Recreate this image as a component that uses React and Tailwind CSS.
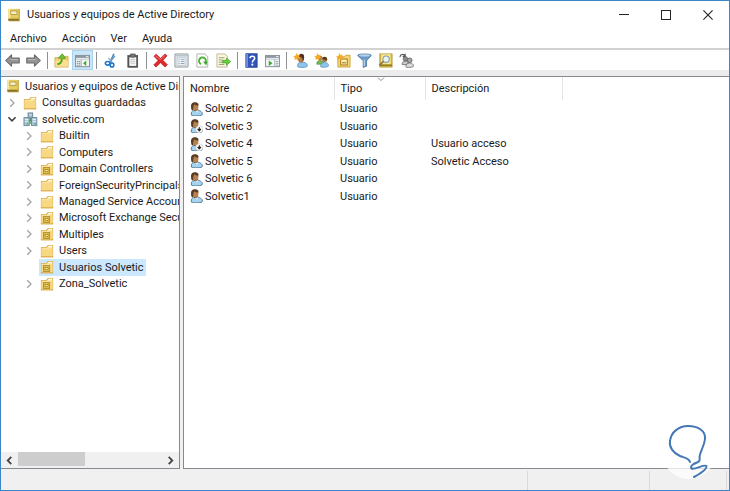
import React from "react";

/* ---------- icons ---------- */

function Svg({ size = "size-[15px]", children, ...rest }) {
  return (
    <svg viewBox="0 0 16 16" className={`${size} shrink-0`} aria-hidden="true" {...rest}>
      {children}
    </svg>
  );
}

const ConsoleIcon = () => (
  <Svg size="size-[14px]">
    <rect x="2" y="1.2" width="12.6" height="14" fill="#b89b35" />
    <rect x="1.4" y="1" width="12" height="12.6" fill="#e6cd62" />
    <rect x="1.4" y="1" width="2.4" height="12.6" fill="#f5e79c" />
    <rect x="4.4" y="3.4" width="7" height="4" fill="#f4efc9" stroke="#a58a2c" strokeWidth=".8" />
    <rect x="1.4" y="12.2" width="12" height="2.2" fill="#8e7426" />
  </Svg>
);

const FolderShape = () => (
  <>
    <path d="M1 3.400h6l2-2.400h6v14H1z" fill="#d9ab48" />
    <path d="M1.800 4.200h6l2-2.400h4.400v12.400H1.800z" fill="#fae3a0" />
    <path d="M1.800 6h8.600l1.600-1.600h2.200v9.800H1.800z" fill="#f8d882" />
    <path d="M10 2.400h3.800v1.200H9.200z" fill="#fffbe8" />
    <path d="M1 14.600h14" stroke="#d3a440" strokeWidth=".9" />
  </>
);

const FolderIcon = () => (
  <Svg size="size-[14px]">
    <FolderShape />
  </Svg>
);

const UnitIcon = () => (
  <Svg size="size-[14px]">
    <FolderShape />
    <rect x="4" y="6.400" width="7" height="6.600" fill="#e8c24e" stroke="#a98a2c" strokeWidth="1" />
    <rect x="5.800" y="8.600" width="3.400" height="2.400" fill="#fff3bd" stroke="#9c7a1c" strokeWidth=".8" />
  </Svg>
);

const DomainIcon = () => (
  <Svg size="size-[15px]">
    <path d="M8 5v4M3 9h10" stroke="#5d8f6a" strokeWidth="1.2" />
    <rect x="5.4" y="1" width="5" height="6" fill="#9fb8c8" stroke="#557687" strokeWidth=".8" />
    <rect x="1" y="6" width="5.6" height="8.6" fill="#a9c3d2" stroke="#5b7b8c" strokeWidth=".8" />
    <rect x="9.2" y="6" width="5.6" height="8.6" fill="#a9c3d2" stroke="#5b7b8c" strokeWidth=".8" />
    <path d="M2 8h3.6M2 10h3.6M10.2 8h3.6M10.2 10h3.6M6.4 3h3" stroke="#eef6fa" strokeWidth=".9" />
    <path d="M6.4 10.6h3M7 12h2" stroke="#4aa35a" strokeWidth="1.3" />
    <path d="M4 12.6h1.4M12.2 12.6h1.4" stroke="#3fae52" strokeWidth="1.4" />
  </Svg>
);

const UserShape = () => (
  <>
    <path d="M2.800 15C2 11.400 4 9 7.400 9c4.200 0 8 2 8 4.600 0 1.600-2.600 2.200-6 2.200-3.200 0-6.400 0-6.600-.8z" fill="#a6d3f0" stroke="#3c6685" strokeWidth=".9" />
    <path d="M6.600 9.400l2.400 2.600 1.600-2.400" fill="#eef8ff" />
    <ellipse cx="6.800" cy="5.200" rx="4" ry="4.600" fill="#b5814f" />
    <path d="M3 9C1.400 4 2.600.4 6.600.4c3.200 0 4.800 1.600 4.200 3.600C9 4.200 7.200 3.400 5.800 2.800 5 4.600 4.600 7 4.600 9.400z" fill="#5a3d26" />
    <path d="M5.400 9.600c2 1 4 .4 4.800-1.600" stroke="#6b4426" strokeWidth=".8" fill="none" />
  </>
);

const UserIcon = ({ disabled }) => (
  <Svg size="size-[14px]">
    <UserShape />
    {disabled && (
      <>
        <circle cx="11.800" cy="11.800" r="4.100" fill="#fff" stroke="#a9a9a9" strokeWidth=".5" />
        <path d="M11.800 9.200v4M9.900 11.600l1.900 2.400 1.900-2.400z" stroke="#222" strokeWidth="1.100" fill="#222" />
      </>
    )}
  </Svg>
);

const ArrowIcon = ({ flip }) => (
  <Svg>
    <path
      d={flip ? "M15.300 8L9 2v3.400H.8v5.200H9V14z" : "M.7 8L7 2v3.400h8.200v5.200H7V14z"}
      fill="#949494"
      stroke="#686868"
      strokeWidth="1.100"
      strokeLinejoin="round"
    />
    <path d={flip ? "M2 7h8" : "M6 7h8"} stroke="#b9b9b9" strokeWidth="1" />
  </Svg>
);

const UpFolderIcon = () => (
  <Svg>
    <path d="M1 5h5l1.500-1.400H15V15H1z" fill="#f3d070" stroke="#c79d3d" strokeWidth=".8" />
    <path d="M1.500 8H15v6.600H1.500z" fill="#f9df94" />
    <path d="M3.600 12c3.200-.6 4.800-2.800 4.800-6" stroke="#4fa51f" strokeWidth="2" fill="none" />
    <path d="M4.600 5.400L8.800.8l3.600 5z" fill="#6fc531" stroke="#3f8c17" strokeWidth=".7" />
  </Svg>
);

const PaneIcon = ({ play }) => (
  <Svg>
    <rect x=".6" y="2.600" width="14.800" height="12" fill="#f5f6f6" stroke="#7f8b93" strokeWidth="1" />
    <rect x=".6" y="2.600" width="14.800" height="2.600" fill="#8e9aa3" />
    <path d="M1 6.600h14" stroke="#c7ced3" strokeWidth="1.200" />
    <path d="M11.800 3.900h2.600" stroke="#fff" strokeWidth="1" />
    {play ? (
      <>
        <path d="M10.400 7v7.400" stroke="#8e9aa3" strokeWidth=".8" />
        <path d="M4 8l4 2.900-4 2.900z" fill="#43a832" />
        <path d="M11.600 9h2.600M11.600 11h2.600M11.600 13h2.600" stroke="#7f98a8" strokeWidth=".9" />
      </>
    ) : (
      <>
        <path d="M6.600 7v7.400" stroke="#8e9aa3" strokeWidth=".8" />
        <path d="M12 8l-3.400 2.900L12 13.800z" fill="#43a832" />
        <path d="M2 9h1.400M4 9h1.600M2 11h1.400M4 11h1.600M2 13h1.400M4 13h1.600" stroke="#5f7f92" strokeWidth="1" />
      </>
    )}
  </Svg>
);

const CutIcon = () => (
  <Svg>
    <path d="M11.600.8L7.600 10" stroke="#4f87b4" strokeWidth="1.700" />
    <path d="M5.800 5.200l4.400 6" stroke="#8fb4d0" strokeWidth="1.500" />
    <path d="M12.800 3L7.600 9.600" stroke="#6b9cc2" strokeWidth="1.400" />
    <ellipse cx="5" cy="11" rx="2.500" ry="1.900" fill="none" stroke="#1d77c9" strokeWidth="1.700" />
    <ellipse cx="9.600" cy="12.800" rx="1.900" ry="2.200" fill="none" stroke="#1d77c9" strokeWidth="1.700" />
  </Svg>
);

const ClipboardIcon = () => (
  <Svg>
    <rect x="3" y="2.600" width="10.600" height="12.600" fill="#555" stroke="#3e3e3e" strokeWidth=".6" />
    <rect x="4.600" y="4.400" width="7.400" height="9.400" fill="#f5f5f5" />
    <rect x="5.600" y="1" width="5.400" height="3.400" rx=".6" fill="#777" stroke="#444" strokeWidth=".7" />
    <path d="M5.800 6.800h5M5.800 8.800h5M5.800 10.800h5" stroke="#b5b5b5" strokeWidth=".8" />
  </Svg>
);

const DeleteIcon = () => (
  <Svg>
    <path
      d="M1 3.400L3.400 1.200 8 5.600 12.800 1 15 3 10.600 7.800 15.400 12.600 12.800 15 8 10.400 3.200 15 .8 12.800 5.400 8z"
      fill="#dd2b2b"
      stroke="#b81b1f"
      strokeWidth=".7"
    />
    <path d="M2.600 3l5.400 4 4.800-4.400" stroke="#f27b75" strokeWidth="1" fill="none" />
  </Svg>
);

const PropertiesIcon = () => (
  <Svg>
    <rect x="1" y="1" width="14" height="14" rx="1" fill="#f5f8fa" stroke="#8d989e" strokeWidth="1.100" />
    <path d="M2 3h12" stroke="#b6c2ca" strokeWidth="1.600" />
    <rect x="3.200" y="5.200" width="9.600" height="7.800" fill="#fff" stroke="#9eafba" strokeWidth=".8" />
    <path d="M4.600 7.200h1.400M7 7.200h4.400M4.600 9.200h1.400M7 9.200h4.400M4.600 11.200h1.400M7 11.200h4.400" stroke="#7c97a9" strokeWidth=".9" />
  </Svg>
);

const PagePath = () => (
  <path d="M2 1h8.600L13.600 4v11H2z" fill="#fdfdfa" stroke="#a7aaa5" strokeWidth=".9" />
);

const RefreshIcon = () => (
  <Svg>
    <PagePath />
    <path d="M6.400 11.800a3.700 3.700 0 1 1 4.400-1" stroke="#4bb539" strokeWidth="2" fill="none" />
    <path d="M8.600 9.400l4.600-.4-1.200 4.200z" fill="#3ba32b" />
  </Svg>
);

const ExportIcon = () => (
  <Svg>
    <path d="M1 1h8.600L12 3.600V15H1z" fill="#fbf7dc" stroke="#b5af88" strokeWidth=".9" />
    <path d="M3 5h6M3 7.400h4M3 9.800h4M3 12.200h6" stroke="#8b8b78" strokeWidth=".9" />
    <path d="M7 7.800h4.200V5.400L15.600 9.200l-4.400 3.800v-2.400H7z" fill="#68cf3b" stroke="#3d9d20" strokeWidth=".7" />
  </Svg>
);

const HelpIcon = () => (
  <Svg>
    <rect x="2" y=".8" width="12" height="14.400" fill="#2f56b8" stroke="#1e3b8a" strokeWidth=".8" />
    <rect x="2.400" y="1" width="1.800" height="14" fill="#7b97de" />
    <path d="M6.400 5.600C6.400 2.600 11.400 2.600 11.400 5.600c0 2-2.500 2-2.500 4.400" stroke="#fff" strokeWidth="1.600" fill="none" />
    <circle cx="8.900" cy="12.400" r="1.100" fill="#fff" />
  </Svg>
);

const Spark = () => (
  <path d="M4 0l1 2.400L7.400 1.600 6.200 3.900 8 5.400l-2.400.4L5.200 8 3.600 6.400 1.400 7.400 2 5 0 3.800l2.400-.6z" fill="#f9a825" />
);

const NewUserIcon = () => (
  <Svg>
    <path d="M5 14.600c-.6-3 1.200-5 4.200-5 3.400 0 6.200 1.600 6.200 3.800 0 1.400-2.200 2-5 2-3 0-5-.1-5.400-.8z" fill="#8fc5ec" stroke="#4682b0" strokeWidth=".7" />
    <ellipse cx="8.400" cy="5.800" rx="3.200" ry="4.200" fill="#b47d48" />
    <path d="M6.600 1.800C9.600-.4 12.600 1.400 11.800 5.400c-.2 1.800-1 3-1.800 3.800C10.800 6.400 10 4.400 6.600 4z" fill="#51331e" />
    <Spark />
  </Svg>
);

const NewGroupIcon = () => (
  <Svg>
    <circle cx="6.600" cy="5.400" r="2.600" fill="#b47d48" />
    <path d="M3 12c-.4-2.600 1-4 3.600-4s4 1.400 4 4z" fill="#73b955" stroke="#48853a" strokeWidth=".6" />
    <circle cx="11.400" cy="7" r="2.700" fill="#a66e3d" />
    <path d="M8.800 6.600C8.600 3.200 14.400 3 14 7.400c-1.600.2-3.400-1.200-5.200-.8z" fill="#55351e" />
    <path d="M7 14.600c-.2-2.800 1.400-4.600 4.200-4.600s4.400 1.600 4.400 3.600c0 1.600-8.200 2.400-8.600 1z" fill="#8fc5ec" stroke="#4682b0" strokeWidth=".6" />
    <Spark />
  </Svg>
);

const NewUnitIcon = () => (
  <Svg>
    <path d="M2 4h7l1.400-1.600H15V15H2z" fill="#f6d675" stroke="#c9992f" strokeWidth=".9" />
    <rect x="5" y="6.400" width="7" height="6.400" fill="#fff1b8" stroke="#a27b17" strokeWidth="1.100" />
    <path d="M6.600 10.400h3.800" stroke="#a27b17" strokeWidth="1.300" />
    <Spark />
  </Svg>
);

const FilterIcon = () => (
  <Svg>
    <path d="M.8 2.400c0-1.800 14.400-1.800 14.400 0 0 1.400-4.600 4.600-5 6V14l-3.600 1.400v-7c-.4-1.400-5.800-4.600-5.800-6z" fill="#6b9cc8" stroke="#3d6892" strokeWidth=".8" />
    <ellipse cx="8" cy="2.600" rx="6" ry="1.200" fill="#b6d2ea" />
    <path d="M7.700 7v7" stroke="#c2dcf1" strokeWidth="1.200" />
  </Svg>
);

const FindIcon = () => (
  <Svg>
    <rect x="2" y="1" width="13" height="14" fill="#dfc044" stroke="#a88c25" strokeWidth=".8" />
    <rect x="3.400" y="1.400" width="10" height="10.600" fill="#f5e996" />
    <path d="M2 13h13" stroke="#806a1a" strokeWidth="1.300" />
    <circle cx="8.600" cy="6.600" r="3.400" fill="#e9f4f6" stroke="#8c9da5" strokeWidth="1.200" />
    <path d="M6 9L1.400 13" stroke="#8e7446" strokeWidth="1.800" />
  </Svg>
);

const GroupAddIcon = () => (
  <Svg>
    <path d="M1 4.600C1 1 5 .6 6.200 3M6.600.8v2.800H3.800" stroke="#555" strokeWidth="1.200" fill="none" />
    <circle cx="6.800" cy="6.200" r="2.400" fill="#8b8b8b" stroke="#555" strokeWidth=".7" />
    <path d="M3.400 12.400C3 10 4.600 8.800 6.800 8.800s3.800 1.200 3.800 3.600z" fill="#c9c9c9" stroke="#666" strokeWidth=".8" />
    <circle cx="11.400" cy="7.800" r="2.500" fill="#a5a5a5" stroke="#555" strokeWidth=".8" />
    <path d="M7.400 14.800c-.2-2.600 1.400-4.200 4-4.200s4.200 1.600 4.200 3.200c0 1.600-7.800 2.200-8.200 1z" fill="#dadada" stroke="#666" strokeWidth=".8" />
  </Svg>
);

const Chevron = ({ open }) => (
  <svg viewBox="0 0 10 10" className="size-[10px] shrink-0" fill="none" aria-hidden="true">
    {open ? (
      <path d="M1.400 3.200L5 6.800l3.600-3.600" stroke="#404040" strokeWidth="1.600" />
    ) : (
      <path d="M3.200 1.200L7 5 3.200 8.800" stroke="#a3a3a3" strokeWidth="1.300" />
    )}
  </svg>
);

/* ---------- data ---------- */

const toolbar = [
  [
    ["Atrás", <ArrowIcon />],
    ["Adelante", <ArrowIcon flip />],
  ],
  [
    ["Subir un nivel", <UpFolderIcon />],
    ["Mostrar árbol", <PaneIcon />, true],
  ],
  [
    ["Cortar", <CutIcon />],
    ["Pegar", <ClipboardIcon />],
  ],
  [
    ["Eliminar", <DeleteIcon />],
    ["Propiedades", <PropertiesIcon />],
    ["Actualizar", <RefreshIcon />],
    ["Exportar lista", <ExportIcon />],
  ],
  [
    ["Ayuda", <HelpIcon />],
    ["Panel de acciones", <PaneIcon play />],
  ],
  [
    ["Nuevo usuario", <NewUserIcon />],
    ["Nuevo grupo", <NewGroupIcon />],
    ["Nueva unidad organizativa", <NewUnitIcon />],
    ["Filtro", <FilterIcon />],
    ["Buscar", <FindIcon />],
    ["Agregar a un grupo", <GroupAddIcon />],
  ],
];

const tree = [
  { label: "Usuarios y equipos de Active Directory", icon: <ConsoleIcon />, level: 0 },
  { label: "Consultas guardadas", icon: <FolderIcon />, level: 1, branch: true },
  { label: "solvetic.com", icon: <DomainIcon />, level: 1, branch: true, open: true },
  { label: "Builtin", icon: <FolderIcon />, level: 2, branch: true },
  { label: "Computers", icon: <FolderIcon />, level: 2, branch: true },
  { label: "Domain Controllers", icon: <UnitIcon />, level: 2, branch: true },
  { label: "ForeignSecurityPrincipals", icon: <FolderIcon />, level: 2, branch: true },
  { label: "Managed Service Accounts", icon: <FolderIcon />, level: 2, branch: true },
  { label: "Microsoft Exchange Security Groups", icon: <UnitIcon />, level: 2, branch: true },
  { label: "Multiples", icon: <UnitIcon />, level: 2, branch: true },
  { label: "Users", icon: <FolderIcon />, level: 2, branch: true },
  { label: "Usuarios Solvetic", icon: <UnitIcon />, level: 2, selected: true },
  { label: "Zona_Solvetic", icon: <UnitIcon />, level: 2, branch: true },
];

const users = [
  { name: "Solvetic 2", description: "" },
  { name: "Solvetic 3", description: "", disabled: true },
  { name: "Solvetic 4", description: "Usuario acceso", disabled: true },
  { name: "Solvetic 5", description: "Solvetic Acceso" },
  { name: "Solvetic 6", description: "" },
  { name: "Solvetic1", description: "" },
];

const indent = ["pl-[4px]", "pl-[6px]", "pl-[23px]"];

/* ---------- parts ---------- */

function TitleBar() {
  return (
    <header className="flex h-[27px] shrink-0 items-center pl-[6px]">
      <ConsoleIcon />
      <h1 className="flex-1 pl-[6px]">Usuarios y equipos de Active Directory</h1>
      <div className="flex h-full">
        <button aria-label="Minimizar" className="flex w-[42px] items-center justify-center">
          <svg viewBox="0 0 10 10" className="size-[10px]"><path d="M0 4.500h10" stroke="#222" /></svg>
        </button>
        <button aria-label="Maximizar" className="flex w-[42px] items-center justify-center">
          <svg viewBox="0 0 10 10" className="size-[10px]"><rect x=".5" y=".5" width="9" height="9" fill="none" stroke="#222" /></svg>
        </button>
        <button aria-label="Cerrar" className="flex w-[42px] items-center justify-center">
          <svg viewBox="0 0 10 10" className="size-[10px]"><path d="M.4.4l9.200 9.200M9.600.4L.4 9.600" stroke="#222" strokeWidth="1.100" /></svg>
        </button>
      </div>
    </header>
  );
}

function MenuBar() {
  return (
    <nav className="flex h-[20px] shrink-0 items-center gap-[15px] pl-[9px]">
      {["Archivo", "Acción", "Ver", "Ayuda"].map((item) => (
        <button key={item}>{item}</button>
      ))}
    </nav>
  );
}

function Toolbar() {
  return (
    <div className="h-[28px] shrink-0 border-t-2 border-[#d2d2d2] bg-[#ececec]">
      <div className="h-[20px] bg-white">
        <div role="toolbar" aria-label="Herramientas" className="flex h-full w-[416px] pl-px">
          {toolbar.map((group, g) => (
            <React.Fragment key={g}>
              {g > 0 && (
                <div className="flex w-[7px] shrink-0 items-center justify-center">
                  <div className="h-[17px] w-px bg-[#8f8f8f]" />
                </div>
              )}
              {group.map(([label, icon, active]) => (
                <button
                  key={label}
                  aria-label={label}
                  className={`flex flex-1 items-center justify-center ${active ? "bg-[#cbe5f8] outline outline-[#a8d4f3] -outline-offset-1" : ""}`}
                >
                  {icon}
                </button>
              ))}
            </React.Fragment>
          ))}
        </div>
      </div>
    </div>
  );
}

function Tree() {
  return (
    <aside className="flex w-[179px] shrink-0 flex-col border border-l-0 border-[#858a90] bg-white">
      <div className="flex-1 overflow-hidden pt-px">
        <ul role="tree" className="flex h-[214px] flex-col">
          {tree.map((node) => (
            <li
              key={node.label}
              role="treeitem"
              aria-level={node.level + 1}
              aria-expanded={node.branch ? !!node.open : undefined}
              aria-selected={!!node.selected}
              className={`flex flex-1 items-center whitespace-nowrap ${indent[node.level]}`}
            >
              {node.level > 0 && (
                <span className="flex w-[15px] shrink-0">
                  {node.branch && <Chevron open={node.open} />}
                </span>
              )}
              <span className={`flex h-full items-center gap-[4px] pr-[2px] ${node.selected ? "bg-[#cce8ff]" : ""}`}>
                <span className="flex w-[16px] shrink-0 justify-center">{node.icon}</span>
                {node.label}
              </span>
            </li>
          ))}
        </ul>
      </div>
      <div className="flex h-[16px] shrink-0 items-center bg-[#f0f0f0]">
        <button aria-label="Desplazar a la izquierda" className="flex w-[17px] justify-center">
          <svg viewBox="0 0 10 10" className="size-[9px]" fill="none"><path d="M7 1L3 5l4 4" stroke="#444" strokeWidth="2" /></svg>
        </button>
        <div className="h-full flex-1">
          <div className="h-[14px] w-[67px] bg-[#cdcdcd]" />
        </div>
        <button aria-label="Desplazar a la derecha" className="flex w-[17px] justify-center">
          <svg viewBox="0 0 10 10" className="size-[9px]" fill="none"><path d="M3 1l4 4-4 4" stroke="#444" strokeWidth="2" /></svg>
        </button>
      </div>
    </aside>
  );
}

function UserList() {
  return (
    <main className="min-w-0 flex-1 border border-r-0 border-[#858a90] bg-white">
      <table className="h-[128px] table-fixed border-collapse text-left">
        <colgroup>
          <col className="w-[150px]" />
          <col className="w-[91px]" />
          <col className="w-[137px]" />
        </colgroup>
        <thead>
          <tr className="h-[23px]">
            <th className="border-r border-[#e4e4e4] pl-[6px] font-normal">Nombre</th>
            <th className="relative border-r border-[#e4e4e4] pl-[6px] font-normal">
              Tipo
              <svg viewBox="0 0 8 5" className="absolute top-0 left-[42px] h-[5px] w-[8px]" fill="none" aria-hidden="true">
                <path d="M1 .6l3 3 3-3" stroke="#8a8a8a" />
              </svg>
            </th>
            <th className="border-r border-[#e4e4e4] pl-[6px] font-normal">Descripción</th>
          </tr>
        </thead>
        <tbody>
          {users.map((user) => (
            <tr key={user.name}>
              <td className="pl-[5px]">
                <span className="flex items-center gap-[2px]">
                  <UserIcon disabled={user.disabled} />
                  {user.name}
                </span>
              </td>
              <td className="pl-[6px]">Usuario</td>
              <td className="pl-[6px]">{user.description}</td>
            </tr>
          ))}
        </tbody>
      </table>
    </main>
  );
}

function StatusBar() {
  return (
    <footer className="flex h-[21px] shrink-0 justify-end bg-[#f0f0f0] pt-[2px]">
      <div className="w-[122px] border-l border-[#d9d9d9]" />
      <div className="w-[78px] border-x border-[#d9d9d9]" />
      <div className="w-[2px]" />
    </footer>
  );
}

function Watermark() {
  return (
    <svg viewBox="0 0 56 56" className="absolute right-[12px] bottom-[10px] size-[56px]" fill="none" aria-hidden="true">
      <circle cx="28" cy="28" r="27" fill="#fff" fillOpacity=".75" />
      <path
        d="M29 38C28 34 23 33.500 19 32C12 29 8 23 9 17C10 8 18 2 27 2C37 2 45 7 44 15C43.500 22 39 27 38.500 33C39 36 39 37 36 38.500C32 40 29 42 30.500 44.500C34 46 43 40 45.500 42C46 45 39 50 33 53"
        stroke="#4477b5"
        strokeWidth="2"
        strokeLinecap="round"
      />
    </svg>
  );
}

export default function App() {
  return (
    <div className="relative flex h-screen flex-col overflow-hidden border border-[#3a86c8] bg-white font-[Roboto,sans-serif] text-[11px] leading-[15px] text-[#1a1a1a]">
      <TitleBar />
      <MenuBar />
      <Toolbar />
      <div className="flex min-h-0 flex-1 gap-[3px] bg-[#f0f0f0]">
        <Tree />
        <UserList />
      </div>
      <StatusBar />
      <Watermark />
    </div>
  );
}
